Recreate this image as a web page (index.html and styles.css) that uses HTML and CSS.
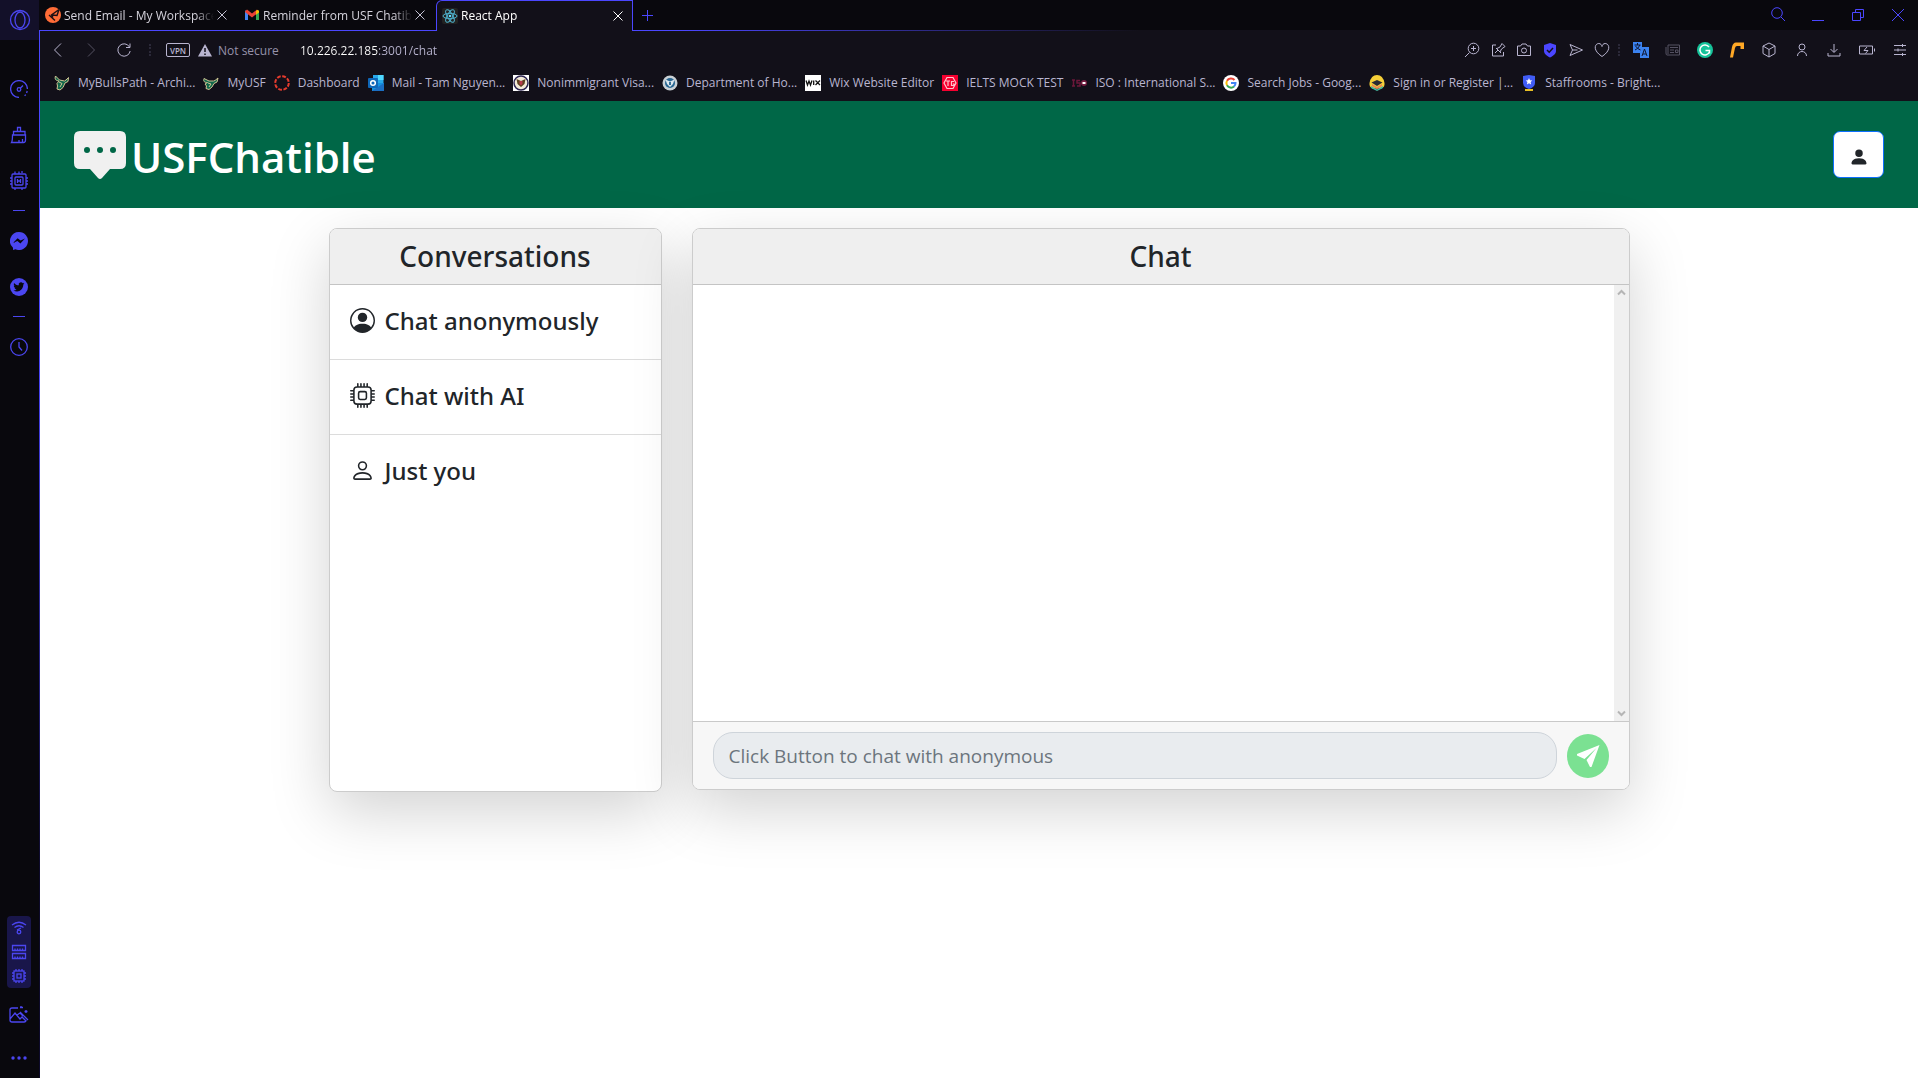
FILE: index.html
```html
<!DOCTYPE html>
<html lang="en">
<head>
<meta charset="UTF-8">
<meta name="viewport" content="width=device-width, initial-scale=1.0">
<title>React App</title>
<link rel="stylesheet" href="styles.css">
</head>
<body>

<nav class="sidebar" aria-label="Sidebar">
    <button class="side-home" aria-label="Home"><svg width="22" height="22" viewBox="0 0 22 22"><circle cx="11" cy="11" r="9.5"/><ellipse cx="11" cy="11" rx="5" ry="8"/></svg></button>
    <div class="side-top">
        <button class="side-btn" aria-label="Speed"><svg width="18" height="18" viewBox="0 0 18 18"><path d="M9 17.4A8.4 8.4 0 1 1 17.4 9"/><path d="M17.2 11l-.6 2M15.8 14.6l-1.2 1.2" /><circle cx="9" cy="9.5" r="1.8"/><path d="M10.3 8.2L13 5.5"/></svg></button>
        <button class="side-btn" aria-label="Cleaner"><svg width="18" height="18" viewBox="0 0 18 18"><path d="M7.5 5V1.5h3V5M3.5 9V5.5h11.500V9M2.500 9h13v5c0 2-1 2.500-2 2.500H1.500C2.500 15 2.500 12 2.500 9zM9 14v2M12.500 13v3"/></svg></button>
        <button class="side-btn" aria-label="Limiter"><svg width="20" height="20" viewBox="0 0 20 20"><rect x="3" y="3" width="14" height="14" rx="1"/><rect x="6" y="6" width="8" height="8" rx="1"/><path d="M8.500 8v4M11.500 8v4M8.500 10h3M6 0.500V3M10 0.500V3M13 2V0M1 7h2M1 10h2M1 13h2M17 7h2M17 10h2M17 13h2M6 17v2M13 17v2"/></svg></button>
    </div>
    <hr class="side-line">
    <button class="side-btn" aria-label="Messenger"><svg width="18" height="18" viewBox="0 0 18 18"><path class="solid" d="M9 0a9 9 0 1 1-3.500 17.300L3 18v-2.300A9 9 0 0 1 9 0z"/><path class="cut" d="M3 11l4.600-4.800 3 2.400L15 6.500l-4.600 4.900-3-2.400z"/></svg></button>
    <button class="side-btn" aria-label="Twitter"><svg width="18" height="18" viewBox="0 0 18 18"><circle class="solid" cx="9" cy="9" r="9"/><path class="cut" d="M14.500 5.500l-1.300.4c.5-.3.8-.7.9-1.200l-1.300.5a2.300 2.300 0 0 0-4 2.100c-1.900-.1-3.600-1-4.700-2.400-.6 1.100-.2 2.300.7 3l-1-.2c0 1.100.8 2 1.800 2.200h-1c.3.900 1.100 1.500 2.100 1.600-.9.700-2.100 1-3.300.9 4.500 2.700 9.900 0 9.900-5.800z"/></svg></button>
    <hr class="side-line">
    <button class="side-btn" aria-label="History"><svg width="18" height="18" viewBox="0 0 18 18"><circle cx="9" cy="9" r="8.300"/><path d="M9 4v5l3 3.500"/></svg></button>

    <div class="side-panel">
        <button aria-label="Network"><svg width="16" height="14" viewBox="0 0 16 14"><path d="M1 4q7-5.500 14 0M3.500 6.500q4.500-3.500 9 0M6 9L8 8l2-1"/><circle cx="8" cy="11" r="1.800"/></svg></button>
        <button aria-label="Memory"><svg width="16" height="16" viewBox="0 0 16 16"><path d="M1.500 1.500h13v5h-13zM1.500 9.500h13v5h-13zM4 6V4.500M6.500 6V4.500M9 6V4.500M11.500 6V4.500M4 14v-1.500M6.500 14v-1.500M9 14v-1.500M11.500 14v-1.500"/></svg></button>
        <button aria-label="Processor"><svg width="16" height="16" viewBox="0 0 16 16"><rect x="3" y="3" width="10" height="10"/><rect x="6" y="6" width="4" height="4"/><path d="M5 1v2M8 1v2M11 1v2M5 13v2M8 13v2M11 13v2M1 5h2M1 8h2M1 11h2M13 5h2M13 8h2M13 11h2"/></svg></button>
    </div>
    <button class="side-btn" aria-label="Wallpaper"><svg width="20" height="18" viewBox="0 0 20 18"><path d="M9 2H3Q1 2 1 4v10q0 2 2 2h12q2 0 2-2M1 13l5-6 5 6 2-2 4 4M8 9l3-2 3 3M11 6l8 8M12 2V0M11 1.500h3M17 4v3M15.500 5.500h3"/></svg></button>
    <button class="side-more" aria-label="More"><svg width="18" height="6" viewBox="0 0 18 6"><circle class="solid" cx="3" cy="3" r="1.700"/><circle class="solid" cx="9" cy="3" r="1.700"/><circle class="solid" cx="15" cy="3" r="1.700"/></svg></button>
</nav>

<div class="browser">
    <div class="tabs">
        <div class="tab tab-first">
            <svg width="16" height="16" viewBox="0 0 16 16"><circle cx="8" cy="8" r="8" fill="#ff6c37"/><path d="M14 2.500L6.500 8 8 10.500M14 2.500L12 8.500 7 8M4 8l6 5.500" fill="none" stroke="#1d1014" stroke-width="1.400"/></svg>
            <span class="tab-title">Send Email - My Workspace</span>
            <button class="tab-close" aria-label="Close tab"><svg width="10" height="10" viewBox="0 0 10 10"><path d="M.5.500l9 9M9.500.500l-9 9"/></svg></button>
        </div>
        <div class="tab">
            <svg width="16" height="16" viewBox="0 0 16 16"><path d="M1 3v10h3V6z" fill="#4285f4"/><path d="M12 6v7h3V3z" fill="#34a853"/><path d="M1 4.500L3 2.500l5 4 5-4v4L8 10.500 1 5z" fill="#ea4335"/><path d="M12 4l1.500-1.300L15 4v1.500l-3 2.300z" fill="#fbbc04"/></svg>
            <span class="tab-title">Reminder from USF Chatible</span>
            <button class="tab-close" aria-label="Close tab"><svg width="10" height="10" viewBox="0 0 10 10"><path d="M.5.500l9 9M9.500.500l-9 9"/></svg></button>
        </div>
        <div class="tab tab-active">
            <svg width="16" height="16" viewBox="0 0 16 16"><rect width="16" height="16" rx="2" fill="#222"/><g fill="none" stroke="#4fb3cf"><ellipse cx="8" cy="8" rx="7" ry="2.700"/><ellipse cx="8" cy="8" rx="7" ry="2.700" transform="rotate(60 8 8)"/><ellipse cx="8" cy="8" rx="7" ry="2.700" transform="rotate(120 8 8)"/></g><circle cx="8" cy="8" r="1.300" fill="#61dafb"/></svg>
            <span class="tab-title">React App</span>
            <button class="tab-close" aria-label="Close tab"><svg width="10" height="10" viewBox="0 0 10 10"><path d="M.5.500l9 9M9.500.500l-9 9"/></svg></button>
        </div>
        <button class="tab-new" aria-label="New tab"><svg width="11" height="11" viewBox="0 0 11 11"><path d="M5.500 0v11M0 5.500h11"/></svg></button>
        <div class="window-controls">
            <button aria-label="Search tabs"><svg width="16" height="16" viewBox="0 0 16 16"><circle cx="7" cy="6" r="5.300"/><path d="M11 10l4 4"/></svg></button>
            <button aria-label="Minimize"><svg width="12" height="12" viewBox="0 0 12 12"><path d="M0 11.500h12"/></svg></button>
            <button aria-label="Restore"><svg width="12" height="12" viewBox="0 0 12 12"><path d="M.5 3.500h8v8h-8zM3.500 3V.5h8v8H9"/></svg></button>
            <button aria-label="Close window"><svg width="12" height="12" viewBox="0 0 12 12"><path d="M0 0l12 12M12 0L0 12"/></svg></button>
        </div>
    </div>

    <div class="window">
        <div class="toolbar">
            <button aria-label="Back"><svg width="16" height="16" viewBox="0 0 16 16"><path d="M11 1.500L4.500 8l6.500 6.500"/></svg></button>
            <button class="dim" aria-label="Forward"><svg width="16" height="16" viewBox="0 0 16 16"><path d="M5 1.500L11.500 8 5 14.500"/></svg></button>
            <button aria-label="Reload"><svg width="16" height="16" viewBox="0 0 16 16"><path d="M13.500 5A6.200 6.200 0 1 0 14.200 9M14 1.500V5.500h-4"/></svg></button>
            <span class="dots"></span>
            <button class="vpn">VPN</button>
            <span class="secure"><svg width="14" height="13" viewBox="0 0 14 13"><path d="M7 0l7 12.500H0z" fill="#b9b5d0" stroke="none"/><path d="M7 4v4M7 9.500v1.500" stroke="#121019" stroke-width="1.500"/></svg>Not secure</span>
            <input class="address" type="text" value="10.226.22.185:3001/chat" aria-label="Address">
            <div class="tools">
                <button aria-label="Zoom"><svg width="16" height="16" viewBox="0 0 16 16"><circle cx="9.500" cy="6.500" r="5.300"/><path d="M5.500 10.500L1 15M7 6.500h5M9.500 4v5"/></svg></button>
                <button aria-label="Edit page"><svg width="16" height="16" viewBox="0 0 16 16"><path d="M6 3H2.500v11h11v-4M5 11l3-3M6 6l5 5M7 6.500L10 5l2-3.500L15 4.500 11.500 7 10 10"/></svg></button>
                <button aria-label="Snapshot"><svg width="16" height="16" viewBox="0 0 16 16"><path d="M1.500 4h3l1.500-2h4l1.500 2h3v9.500h-13z"/><circle cx="8" cy="8.500" r="2.500"/></svg></button>
                <button aria-label="Ad blocker"><svg width="16" height="16" viewBox="0 0 16 16"><path d="M8 1l6 2v6c0 3-3 5-6 6.500C5 14 2 12 2 9V3z" fill="#4b46ff" stroke="none"/><path d="M5 8l2.200 2.200L11 6" stroke="#121019" stroke-width="1.500"/></svg></button>
                <button aria-label="Send"><svg width="16" height="16" viewBox="0 0 16 16"><path d="M2 2.500L14.500 8 2 13.500 4.500 8zM4.500 8h5"/></svg></button>
                <button aria-label="Add bookmark"><svg width="16" height="16" viewBox="0 0 16 16"><path d="M8 14.500C-2 8 1 1.500 4.800 1.500 6.500 1.500 8 3 8 4.500c0-1.500 1.500-3 3.200-3C15 1.500 18 8 8 14.500z"/></svg></button>
            </div>
            <span class="dots"></span>
            <div class="extensions">
                <button aria-label="Translate"><svg width="16" height="16" viewBox="0 0 16 16"><path d="M0 0h9v5h7v11H7v-5H0z" fill="#3b82f0" stroke="none"/><path d="M1.500 3h6M4.500 1v2M7 3Q5 7 2 8M2.500 4q2 3 5 4M9 14l2.500-7 2.500 7M10 12h3" stroke="#10162e"/></svg></button>
                <button class="dim" aria-label="News"><svg width="16" height="16" viewBox="0 0 16 16"><path d="M3 3h11.500v10H2q-1 0-1-2V5M3 3v9M5 5.500h8M5 8h4M5 10.500h4M10.500 8H13v2.500h-2.500z"/></svg></button>
                <button aria-label="Grammar"><svg width="16" height="16" viewBox="0 0 16 16"><circle cx="8" cy="8" r="8" fill="#15c39a" stroke="none"/><path d="M12 5a5 5 0 1 0 .5 5M8.500 8.500h4v3" stroke="#fff" stroke-width="1.500"/></svg></button>
                <button aria-label="Coupons"><svg width="16" height="16" viewBox="0 0 16 16"><path d="M1 15.500L3 5Q4 .5 7 .5h8V7h-3.500V4H8Q6.500 4 6 6l-2 9.500z" fill="#ffa826" stroke="none"/></svg></button>
                <button aria-label="Extensions"><svg width="16" height="16" viewBox="0 0 16 16"><path d="M8 1l6 3v7.500l-6 3.500-6-3.500V4zM2 4l6 3.500L14 4M8 7.500V15"/></svg></button>
            </div>
            <div class="profile-tools">
                <button aria-label="Profile"><svg width="16" height="16" viewBox="0 0 16 16"><circle cx="8" cy="5" r="3"/><path d="M3.500 14c0-6 9-6 9 0"/></svg></button>
                <button aria-label="Downloads"><svg width="16" height="16" viewBox="0 0 16 16"><path d="M8 2v8M4.500 7L8 10.500 11.500 7M2 11v3h12v-3"/></svg></button>
                <button aria-label="Battery"><svg width="18" height="16" viewBox="0 0 18 16"><path d="M1.500 4h13v8h-13zM16.500 6.500v3M9 5L6 8.500h4L7.500 11.500"/></svg></button>
                <button aria-label="Easy setup"><svg width="16" height="16" viewBox="0 0 16 16"><path d="M2 3.500h12M2 8h12M2 12.500h12M10.500 2v3M6 6.500v3M10.500 11v3"/></svg></button>
            </div>
        </div>

        <nav class="bookmarks" aria-label="Bookmarks">
            <a href="#"><svg width="16" height="16" viewBox="0 0 16 16"><path d="M1.500 1c-1 3 0 4.500 3.500 5L3 8.500 3.500 11 3 14l3 1 3-2.500L11 8l3-1.500.5-4-2.500 2.500-1.500 1-5-1z" fill="#11684b" stroke="#cfc493"/><path d="M5 7l3 1.500L6 12"  stroke="#cfc493"/></svg>MyBullsPath - Archi...</a>
            <a href="#"><svg width="16" height="16" viewBox="0 0 16 16"><path d="M1 3.500c-1 3 .5 4 3.500 4L2 9l1.500 2L3 13.500l3 1 3-2.500 2-3.500 3-1.500 1-4-3 2.500-1.500.5-4.500 0z" fill="#11684b" stroke="#cfc493"/><path d="M5 8l3 1-2 3"  stroke="#cfc493"/></svg>MyUSF</a>
            <a href="#"><svg width="16" height="16" viewBox="0 0 16 16"><circle cx="8" cy="8" r="6.800" fill="none" stroke="#e63b2e" stroke-width="2" stroke-dasharray="3.800 1.540"/></svg>Dashboard</a>
            <a href="#"><svg width="16" height="16" viewBox="0 0 16 16"><path d="M5 0h10.500v8H5z" fill="#28a8ea"/><path d="M10 0h5.500v5H10z" fill="#50d9ff"/><path d="M4 8h12v8H4z" fill="#1490df"/><path d="M4 16l12-8v8z" fill="#1b6ec2"/><rect y="3" width="10" height="10" rx="1" fill="#0f67b8"/><circle cx="5" cy="8" r="2.300" fill="none" stroke="#fff" stroke-width="1.500"/></svg>Mail - Tam Nguyen...</a>
            <a href="#"><svg width="16" height="16" viewBox="0 0 16 16"><path d="M0 0h16v16H0z" fill="#fff"/><circle cx="8" cy="8" r="7" fill="#f3ead8" stroke="#2c2552" stroke-width="1.500"/><path d="M3.500 4L8 6l4.500-2-1 5L8 12 4.500 9z" fill="#5d4221"/><path d="M6.500 6h3v3L8 10.500 6.500 9z" fill="#b63a4b"/></svg>Nonimmigrant Visa...</a>
            <a href="#"><svg width="16" height="16" viewBox="0 0 16 16"><circle cx="8" cy="8" r="7.500" fill="#c9d0d5"/><circle cx="8" cy="8" r="5" fill="#276692"/><path d="M3.500 4.500L8 6.500l4.500-2L11 9l-3 3-3-3z" fill="#dce7ed"/><path d="M7 7h2v3H7z" fill="#346e95"/></svg>Department of Ho...</a>
            <a href="#"><svg width="16" height="16" viewBox="0 0 16 16"><path d="M0 0h16v16H0z" fill="#fff"/><path d="M1 5.500L2.500 10 4 6l1.500 4L7 5.500M8.700 5.500V10M10.500 5.500L15 10M15 5.500L10.500 10" fill="none" stroke="#111" stroke-width="1.300"/></svg>Wix Website Editor</a>
            <a href="#"><svg width="16" height="16" viewBox="0 0 16 16"><path d="M0 0h16v16H0z" fill="#f5002f"/><path d="M5 2.500h6L14 8l-3 5.500H5L2 8zM4 6h4M6 6v5M12 6.500H9.500v4H12V9h-1" fill="none" stroke="#ffc5cc" stroke-width="1.200"/></svg>IELTS MOCK TEST</a>
            <a href="#"><svg width="16" height="16" viewBox="0 0 16 16"><path d="M1 5h3M2.500 5v6M1 11h3M9 5.500H6V8h3v3H6" fill="none" stroke="#6b173a" stroke-width="1.500"/><circle cx="13" cy="8" r="3" fill="#741c40"/><path d="M11.500 7h3v2h-3z" fill="#fff"/></svg>ISO : International S...</a>
            <a href="#"><svg width="16" height="16" viewBox="0 0 16 16"><circle cx="8" cy="8" r="8" fill="#fff"/><g fill="none" stroke-width="2"><path d="M11.500 5A4.600 4.600 0 0 0 4 5.800" stroke="#ea4335"/><path d="M4 5.800a4.600 4.600 0 0 0 0 4.500" stroke="#fbbc05"/><path d="M4 10.300a4.600 4.600 0 0 0 7 1.200" stroke="#34a853"/><path d="M11 11.500A4.600 4.600 0 0 0 12.500 8H8" stroke="#4285f4"/></g></svg>Search Jobs - Goog...</a>
            <a href="#"><svg width="16" height="16" viewBox="0 0 16 16"><path d="M.5 8Q2 0 8 0t7.500 8q.5 4-3 5.500h-9Q0 12 .5 8z" fill="#f5cf38"/><path d="M2 11l6 3.500 6-3.500v2L8 16l-6-3z" fill="#45b6a0"/><path d="M3 9l5 3 5-3v2l-5 3-5-3z" fill="#e98558"/><path d="M2.500 7.500L8 5l5.500 2.500L8 11z" fill="#292b33"/></svg>Sign in or Register |...</a>
            <a href="#"><svg width="16" height="16" viewBox="0 0 16 16"><path d="M2 1l6-1 6 1v7q0 4-6 6-6-2-6-6z" fill="#405cf5"/><path d="M8 3l1 2.200 2.300.2L9.600 7l.5 2.400L8 8.200 5.900 9.400 6.400 7 4.700 5.400 7 5.200z" fill="#fff"/><path d="M4 14h8v2H4z" fill="#e9bf23"/></svg>Staffrooms - Bright...</a>
        </nav>

        <div class="page">
            <header class="header">
                <a href="#" class="brand">
                    <svg width="52" height="48" viewBox="0 0 52 48"><path d="M6 0h40q6 0 6 6v26q0 6-6 6H36l-8 9q-2 2-4 0l-8-9H6q-6 0-6-6V6q0-6 6-6z" fill="#f0f0f0"/><g fill="#006747"><circle cx="13" cy="19" r="3"/><circle cx="26" cy="19" r="3"/><circle cx="39" cy="19" r="3"/></g></svg>
                    <span>USFChatible</span>
                </a>
                <button class="user-btn" aria-label="Account"><svg width="20" height="20" viewBox="0 0 16 16"><path d="M3 14s-1 0-1-1 1-4 6-4 6 3 6 4-1 1-1 1H3zm5-6a3 3 0 1 0 0-6 3 3 0 0 0 0 6z"/></svg></button>
            </header>

            <main class="container">
                <section class="card">
                    <h2 class="card-header">Conversations</h2>
                    <ul class="conversations">
                        <li><a href="#"><svg width="25" height="25" viewBox="0 0 16 16"><path d="M11 6a3 3 0 1 1-6 0 3 3 0 0 1 6 0z"/><path fill-rule="evenodd" d="M0 8a8 8 0 1 1 16 0A8 8 0 0 1 0 8zm8-7a7 7 0 0 0-5.468 11.370C3.242 11.226 4.805 10 8 10s4.757 1.225 5.468 2.370A7 7 0 0 0 8 1z"/></svg>Chat anonymously</a></li>
                        <li><a href="#"><svg width="25" height="25" viewBox="0 0 16 16"><path d="M5 0a.5.5 0 0 1 .5.5V2h1V.5a.5.5 0 0 1 1 0V2h1V.5a.5.5 0 0 1 1 0V2h1V.5a.5.5 0 0 1 1 0V2A2.500 2.500 0 0 1 14 4.500h1.500a.5.5 0 0 1 0 1H14v1h1.500a.5.5 0 0 1 0 1H14v1h1.500a.5.5 0 0 1 0 1H14v1h1.500a.5.5 0 0 1 0 1H14a2.500 2.500 0 0 1-2.500 2.500v1.500a.5.5 0 0 1-1 0V14h-1v1.500a.5.5 0 0 1-1 0V14h-1v1.500a.5.5 0 0 1-1 0V14h-1v1.500a.5.5 0 0 1-1 0V14A2.500 2.500 0 0 1 2 11.500H.5a.5.5 0 0 1 0-1H2v-1H.5a.5.5 0 0 1 0-1H2v-1H.5a.5.5 0 0 1 0-1H2v-1H.5a.5.5 0 0 1 0-1H2A2.500 2.500 0 0 1 4.500 2V.5A.5.5 0 0 1 5 0zm-.5 3A1.500 1.500 0 0 0 3 4.500v7A1.500 1.500 0 0 0 4.500 13h7a1.500 1.500 0 0 0 1.500-1.500v-7A1.500 1.500 0 0 0 11.500 3h-7zM5 6.500A1.500 1.500 0 0 1 6.500 5h3A1.500 1.500 0 0 1 11 6.500v3A1.500 1.500 0 0 1 9.500 11h-3A1.500 1.500 0 0 1 5 9.500v-3zM6.500 6a.5.5 0 0 0-.5.5v3a.5.5 0 0 0 .5.5h3a.5.5 0 0 0 .5-.5v-3a.5.5 0 0 0-.5-.5h-3z"/></svg>Chat with AI</a></li>
                        <li><a href="#"><svg width="25" height="25" viewBox="0 0 16 16"><path d="M8 8a3 3 0 1 0 0-6 3 3 0 0 0 0 6zm2-3a2 2 0 1 1-4 0 2 2 0 0 1 4 0zm4 8c0 1-1 1-1 1H3s-1 0-1-1 1-4 6-4 6 3 6 4zm-1-.004c-.001-.246-.154-.986-.832-1.664C11.516 10.680 10.289 10 8 10c-2.290 0-3.516.68-4.168 1.332-.678.678-.83 1.418-.832 1.664h10z"/></svg>Just you</a></li>
                    </ul>
                </section>

                <section class="card">
                    <h2 class="card-header">Chat</h2>
                    <div class="chat-body">
                        <div class="scrollbar" aria-hidden="true">
                            <svg width="9" height="7" viewBox="0 0 9 7"><path d="M1 5.500l3.500-3.500L8 5.500"/></svg>
                            <svg width="9" height="7" viewBox="0 0 9 7"><path d="M1 1.500L4.500 5 8 1.500"/></svg>
                        </div>
                    </div>
                    <form class="chat-form">
                        <input type="text" placeholder="Click Button to chat with anonymous" aria-label="Message" disabled>
                        <button type="button" class="send-btn" aria-label="Send message"><svg width="24" height="24" viewBox="0 0 24 24"><path d="M23.500 1L1 10v1.500l7.500 3.500L20.500 4 10.500 16l3.500 7h1.500z"/></svg></button>
                    </form>
                </section>
            </main>
        </div>
    </div>
</div>

</body>
</html>
```
FILE: styles.css
```css
* {
    box-sizing: border-box;
}
body {
    display: flex;
    min-height: 100vh;
    margin: 0;
    background: #09080d;
    color: #212529;
    font-family: "Segoe UI", "Open Sans", sans-serif;
    font-size: 12px;
}
button {
    display: flex;
    align-items: center;
    justify-content: center;
    padding: 0;
    border: 0;
    background: none;
    color: inherit;
    font-family: inherit;
    cursor: pointer;
}
a {
    color: inherit;
    text-decoration: none;
}
svg {
    flex: none;
}

/* sidebar */
.sidebar {
    display: flex;
    flex-direction: column;
    width: 39px;
    flex: none;
}
.sidebar svg {
    fill: none;
    stroke: #4b46f0;
    stroke-width: 1.3;
}
.sidebar .solid {
    fill: #4b46f0;
    stroke: none;
}
.sidebar .cut {
    fill: #09080d;
    stroke: none;
}
.side-home {
    height: 40px;
    margin-bottom: 26px;
    background: #131029;
}
.side-btn {
    width: 38px;
    height: 46px;
}
.side-line {
    width: 12px;
    height: 1px;
    margin: 6px 13px 7px;
    border: 0;
    background: #4b46f0;
}
.side-panel {
    margin: auto 8px 4px 7px;
    border-radius: 4px;
    background: #19164a;
}
.side-panel button {
    width: 24px;
    height: 24px;
}
.side-more {
    width: 38px;
    height: 40px;
}

/* tabs */
.browser {
    display: flex;
    flex-direction: column;
    flex: 1;
    min-width: 0;
}
.tabs {
    display: flex;
    height: 31px;
    padding-bottom: 1px;
    background: linear-gradient(#09080d, #09080d) 0 0 / 100% 30px no-repeat,
        linear-gradient(to right, #4b46ff 640px, #121019 1100px);
}
.tab {
    display: flex;
    align-items: center;
    gap: 3px;
    width: 198px;
    padding: 0 11px 0 6px;
    color: #d5d3dc;
}
.tab-title {
    flex: 1;
    overflow: hidden;
    white-space: nowrap;
    -webkit-mask-image: linear-gradient(to right, #000 88%, transparent);
    mask-image: linear-gradient(to right, #000 88%, transparent);
}
.tab-close svg {
    stroke: #c5c2d4;
}
.tab-first {
    width: 199px;
}
.tab-active {
    height: 31px;
    width: 197px;
    padding: 0 9px 1px 5px;
    border: 1px solid #4b46ff;
    border-bottom: 0;
    border-top-left-radius: 6px;
    background: #121019;
    color: #fff;
}
.tab-active .tab-close svg {
    stroke: #fff;
}
.tab-new {
    width: 29px;
}
.tab-new svg,
.window-controls svg {
    fill: none;
    stroke: #4b46ff;
}
.window-controls {
    display: flex;
    margin-left: auto;
}
.window-controls button {
    width: 40px;
}

/* toolbar */
.window {
    display: flex;
    flex-direction: column;
    flex: 1;
    padding-left: 1px;
    background: linear-gradient(#4b46ff 30%, #0d0a2a 80%);
}
.toolbar {
    display: flex;
    align-items: center;
    height: 38px;
    padding: 0 10px;
    background: #121019;
    color: #b9b5d0;
}
.toolbar svg {
    fill: none;
    stroke: #b9b5d0;
}
.toolbar > button {
    width: 16px;
    margin-right: 17px;
}
.toolbar .dim {
    opacity: 0.4;
}
.dots {
    height: 12px;
    border-left: 2px dotted #2b2939;
}
.toolbar .vpn {
    width: 24px;
    height: 14px;
    margin: 0 8px 0 15px;
    border: 1px solid #b9b5d0;
    border-radius: 2px;
    font-size: 8px;
    font-weight: 600;
}
.secure {
    display: flex;
    align-items: center;
    gap: 6px;
    width: 102px;
    color: #9692aa;
    font-size: 12px;
    white-space: nowrap;
}
.address {
    flex: 1;
    min-width: 0;
    padding: 0;
    border: 0;
    outline: 0;
    background: linear-gradient(to right, #fff 78px, #b9b5d0 78px);
    -webkit-background-clip: text;
    background-clip: text;
    color: transparent;
    font-family: inherit;
    font-size: 12px;
}
.tools {
    display: flex;
    gap: 10px;
    margin-right: 8px;
}
.extensions {
    display: flex;
    gap: 16px;
    margin: 0 17px 0 13px;
}
.profile-tools {
    display: flex;
    gap: 16px;
}

/* bookmarks */
.bookmarks {
    display: flex;
    gap: 8px;
    height: 32px;
    padding: 0 14px 5px;
    overflow: hidden;
    background: #121019;
    color: #b9b5d0;
    white-space: nowrap;
}
.bookmarks a {
    display: flex;
    align-items: center;
    gap: 8px;
}
.bookmarks svg {
    fill: none;
}

/* page */
.page {
    flex: 1;
    background: #fff;
}
.header {
    display: flex;
    align-items: center;
    justify-content: space-between;
    height: 107px;
    padding: 0 34px;
    background: #006747;
}
.brand {
    display: flex;
    align-items: center;
    gap: 5px;
    color: #fff;
    font-family: "Trebuchet MS", "Open Sans", sans-serif;
    font-size: 42px;
    font-weight: 600;
}
.brand span {
    padding-top: 4px;
}
.user-btn {
    width: 51px;
    height: 47px;
    padding-top: 4px;
    border: 1px solid #0d6efd;
    border-radius: 7px;
    background: #fff;
    fill: #212529;
}
.container {
    display: grid;
    grid-template-columns: 333px 1fr;
    align-items: start;
    gap: 30px;
    max-width: 1301px;
    margin: 20px auto;
}
.card {
    border: 1px solid #ccc;
    border-radius: 8px;
    background: #fff;
    box-shadow: 0 20px 60px rgba(0, 0, 0, 0.175);
}
.card-header {
    margin: 0;
    padding: 8px;
    border-bottom: 1px solid #c4c4c4;
    border-radius: 7px 7px 0 0;
    background: #efefef;
    font-family: "Segoe UI", "Noto Sans", sans-serif;
    font-size: 28px;
    font-weight: 500;
    line-height: 39px;
    text-align: center;
}
.conversations {
    height: 506px;
    margin: 0;
    padding: 0;
    list-style: none;
}
.conversations li {
    border-bottom: 1px solid #dcdcdc;
}
.conversations li:last-child {
    border-bottom: 0;
}
.conversations a {
    display: flex;
    align-items: center;
    gap: 10px;
    height: 74px;
    padding: 0 20px 4px;
    fill: #212529;
    font-family: "Segoe UI", "Noto Sans", sans-serif;
    font-size: 24px;
    font-weight: 500;
}
.chat-body {
    display: flex;
    justify-content: flex-end;
    height: 436px;
}
.scrollbar {
    display: flex;
    flex-direction: column;
    align-items: center;
    justify-content: space-between;
    width: 15px;
    padding: 4px 0;
    background: #f0f0f0;
}
.scrollbar svg {
    fill: none;
    stroke: #b5b5b5;
    stroke-width: 2;
}
.chat-form {
    display: flex;
    align-items: center;
    gap: 10px;
    padding: 10px 20px;
    border-top: 1px solid #c9c9c9;
    border-radius: 0 0 7px 7px;
    background: #f7f7f7;
}
.chat-form input {
    flex: 1;
    min-width: 0;
    height: 47px;
    padding: 0 15px;
    border: 1px solid #ced4da;
    border-radius: 20px;
    background: #e9ecef;
    font-family: inherit;
    font-size: 19px;
}
.chat-form input::placeholder {
    color: #6c757d;
}
.send-btn {
    width: 42px;
    height: 44px;
    border-radius: 50%;
    background: #7be192;
    fill: #fff;
}
```
